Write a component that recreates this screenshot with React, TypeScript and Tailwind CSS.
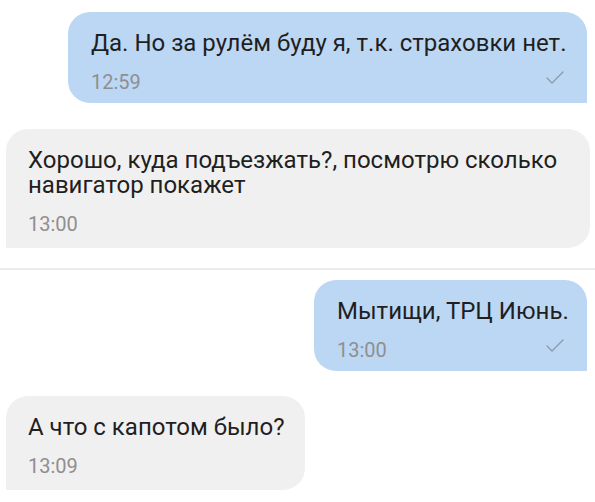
import { Check } from "lucide-react";

type Msg = { text: string; time: string; out: boolean; width: string; wrap?: boolean };

function Bubble({ text, time, out, width, wrap }: Msg) {
  return (
    <div
      className={
        out
          ? `self-end rounded-[22px] rounded-br-none bg-[#bcd7f4] pl-[23px] pr-[22px] pt-[19px] pb-[9px] ${width}`
          : `self-start rounded-[22px] rounded-bl-none bg-[#f0f0f0] pl-[22px] pr-[22px] pt-[19px] pb-[12px] ${width}`
      }
    >
      <p className={wrap ? "text-[24px] leading-[25px] text-[#1f1f1f]" : "whitespace-nowrap text-[24px] leading-[25px] text-[#1f1f1f]"}>
        {text}
      </p>
      <div className="mt-[14px] flex items-center justify-between">
        <span className="text-[20px] leading-[24px] text-[#8f8f8f]">{time}</span>
        {out && <Check className="-mt-[8px] -mr-[2px] h-[24px] w-[24px] text-[#8a98a8]" strokeWidth={1.2} />}
      </div>
    </div>
  );
}

export default function App() {
  return (
    <div className="flex h-[502px] w-[595px] flex-col overflow-hidden bg-white pt-[12px] pl-[6px] pr-[8px]" style={{ fontFamily: "Roboto, 'Noto Sans', sans-serif" }}>
      <Bubble text="Да. Но за рулём буду я, т.к. страховки нет." time="12:59" out width="w-[519px]" />
      <div className="mt-[26px]">
        <Bubble text="Хорошо, куда подъезжать?, посмотрю сколько навигатор покажет" time="13:00" out={false} width="w-[584px]" wrap />
      </div>
      <div className="mt-[20px] -ml-[6px] -mr-[8px] h-[2px] bg-[#ececec]" />
      <div className="mt-[10px] flex flex-col">
        <Bubble text="Мытищи, ТРЦ Июнь." time="13:00" out width="w-[273px]" />
      </div>
      <div className="mt-[25px]">
        <Bubble text="А что с капотом было?" time="13:09" out={false} width="w-[299px]" />
      </div>
    </div>
  );
}
